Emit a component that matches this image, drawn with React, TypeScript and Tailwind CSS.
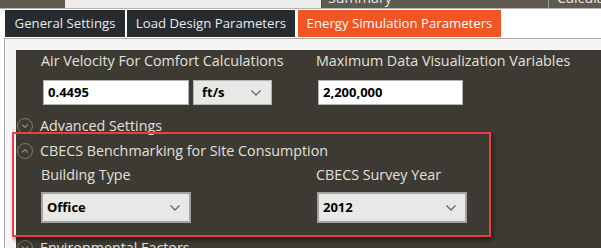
import React from "react";

const font = { fontFamily: '"Open Sans", "Noto Sans", sans-serif' };

function Chevron() {
  return (
    <svg width="12" height="8" viewBox="0 0 12 8" fill="none">
      <path d="M1.5 1.5 6 6l4.5-4.5" stroke="#6b6b6b" strokeWidth="1.4" />
    </svg>
  );
}

function CircleToggle({ up = false }: { up?: boolean }) {
  return (
    <span className="w-[16px] h-[16px] rounded-full border border-[#7d7a73] flex items-center justify-center shrink-0">
      <svg width="8" height="6" viewBox="0 0 8 6" fill="none">
        <path d={up ? "M1 4.5 4 1.5l3 3" : "M1 1.5 4 4.5l3-3"} stroke="#8f8c85" strokeWidth="1.1" />
      </svg>
    </span>
  );
}

function TextBox({ value, width }: { value: string; width: string }) {
  return (
    <div className={`${width} h-[25px] bg-white border border-[#b4b4b4] flex items-center pl-[4px] text-[13px] font-bold text-black`}>
      {value}
    </div>
  );
}

function Select({ value }: { value: string }) {
  return (
    <div className="w-[150px] h-[31px] bg-[#e8e8e6] border-2 border-[#a3a3a1] flex items-center justify-between pl-[4px] pr-[8px] text-[13px] font-bold text-black">
      <span>{value}</span>
      <Chevron />
    </div>
  );
}

export default function App() {
  return (
    <div className="w-[601px] h-[248px] overflow-hidden bg-white relative flex flex-col" style={font}>
      {/* window strip above the tabs */}
      <div className="h-[8px] flex shrink-0 bg-[#5e5a50]">
        <div className="w-[65px]" />
        <div className="w-[257px] bg-[#ececec] border-r border-[#4a463e]" />
        <div className="w-[226px] relative overflow-hidden">
          <span className="absolute left-[6px] top-[-13px] text-[14.3px] text-[#e8e6e0]">Summary</span>
        </div>
        <div className="w-px bg-[#9b978d]" />
        <div className="flex-1 relative overflow-hidden">
          <span className="absolute left-[8px] top-[-13px] text-[14.3px] text-[#e8e6e0]">Calculations</span>
        </div>
      </div>
      <div className="h-px bg-[#b5b5b5] shrink-0" />

      {/* tabs */}
      <div className="flex pl-[5px] pt-[1px] gap-[2px] shrink-0">
        <div className="w-[120px] h-[27px] bg-[#262b30] flex items-center justify-center text-[13.2px] text-[#e9e9e9]">General Settings</div>
        <div className="w-[168px] h-[27px] bg-[#262b30] flex items-center justify-center text-[13.2px] text-[#e9e9e9]">Load Design Parameters</div>
        <div className="w-[203px] h-[27px] ml-px bg-[#f15524] flex items-center justify-center text-[13.2px] text-white">Energy Simulation Parameters</div>
      </div>

      {/* page body */}
      <div className="flex-1 mt-px ml-[4px] border-l border-t border-[#acacac] bg-[#f5f5f5] pl-[11px] pt-[11px] flex">
        <div className="flex-1 bg-[#3d3a34] text-[#e2e0dc] flex flex-col text-[14.3px]">
          <div className="flex">
            <div className="w-[300px] pl-[25px]">
              <div className="h-[21px] leading-[21px] whitespace-nowrap">Air Velocity For Comfort Calculations</div>
              <div className="flex gap-[4px] mt-[9px] ml-[2px]">
                <TextBox value="0.4495" width="w-[146px]" />
                <div className="w-[79px] h-[25px] bg-[#e8e8e6] border border-[#b4b4b4] flex items-center justify-between pl-[8px] pr-[9px] text-[13px] font-bold text-black">
                  <span>ft/s</span>
                  <Chevron />
                </div>
              </div>
            </div>
            <div className="flex-1">
              <div className="h-[21px] leading-[21px] whitespace-nowrap">Maximum Data Visualization Variables</div>
              <div className="mt-[9px] ml-[2px]">
                <TextBox value="2,200,000" width="w-[145px]" />
              </div>
            </div>
          </div>

          <div className="flex items-center gap-[7px] pl-[1px] mt-[12px] h-[17px]">
            <CircleToggle />
            <span>Advanced Settings</span>
          </div>

          <div className="flex items-center gap-[7px] pl-[1px] mt-[8px] h-[17px]">
            <CircleToggle up />
            <span>CBECS Benchmarking for Site Consumption</span>
          </div>

          <div className="flex mt-[6px]">
            <div className="w-[300px] pl-[25px]">
              <div className="h-[20px] leading-[20px]">Building Type</div>
              <div className="mt-[7px]">
                <Select value="Office" />
              </div>
            </div>
            <div className="flex-1">
              <div className="h-[20px] leading-[20px]">CBECS Survey Year</div>
              <div className="mt-[7px] ml-[1px]">
                <Select value="2012" />
              </div>
            </div>
          </div>

          <div className="flex items-center gap-[7px] pl-[1px] mt-[16px] h-[17px]">
            <CircleToggle />
            <span>Environmental Factors</span>
          </div>
        </div>
      </div>

      {/* red annotation box */}
      <div className="absolute left-[12px] top-[132px] w-[479px] h-[105px] border-[2.5px] border-[#ef3b41] shadow-[2px_3px_4px_rgba(0,0,0,0.45)] pointer-events-none" />
    </div>
  );
}
